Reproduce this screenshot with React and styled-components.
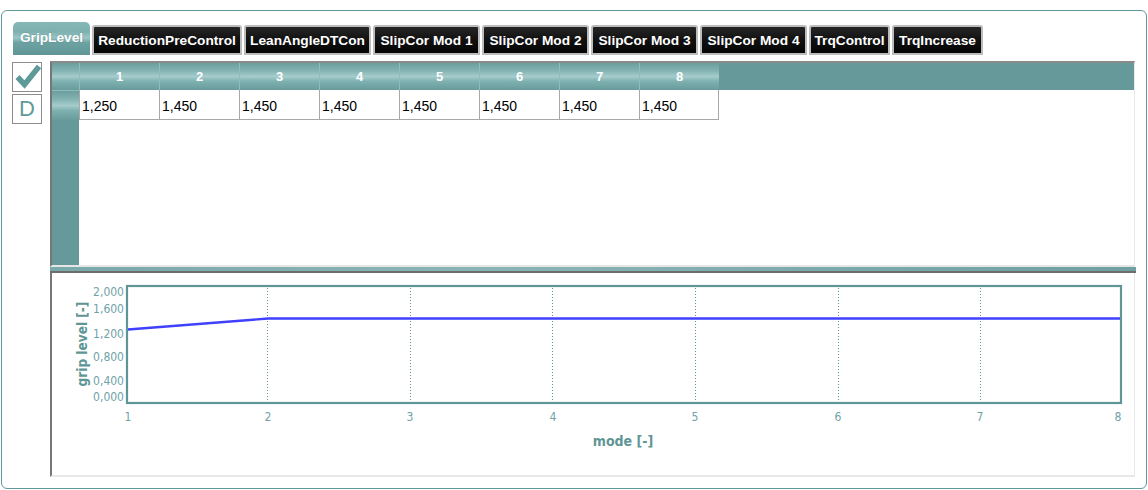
import React from "react";
import styled, { createGlobalStyle } from "styled-components";

const TEAL = "#669999";

const Global = createGlobalStyle`
  html, body { margin: 0; padding: 0; background: #ffffff; }
  body { font-family: "Liberation Sans", Arial, sans-serif; }
`;

const Frame = styled.div`
  margin: 10px 0 0 1px;
  width: 1146px;
  height: 479px;
  box-sizing: border-box;
  border: 1px solid #5f9898;
  border-radius: 6px;
  padding: 11px 0 0 10px;
`;

const TabBar = styled.div`
  display: flex;
  align-items: flex-end;
  gap: 2px;
  height: 33px;
  padding-left: 1px;
`;

const Tab = styled.div`
  box-sizing: border-box;
  width: ${(p) => p.$w}px;
  display: flex;
  align-items: center;
  justify-content: center;
  font-family: "Liberation Sans", Arial, sans-serif;
  font-weight: bold;
  font-size: 13.7px;
  color: #ffffff;
  white-space: nowrap;
  border-radius: ${(p) => (p.$active ? "5px 5px 0 0" : "3px 3px 0 0")};
  height: ${(p) => (p.$active ? "33px" : "30px")};
  padding-bottom: ${(p) => (p.$active ? "2px" : "0")};
  border: ${(p) => (p.$active ? "none" : "2px solid #bcbcbc")};
  background: ${(p) =>
    p.$active
      ? "linear-gradient(to bottom, #86b7b7 0%, #7fb1b1 30%, #9cc6c6 48%, #6fa3a3 62%, #5f9595 100%)"
      : "linear-gradient(to bottom, #262626 0%, #111111 50%, #050505 100%)"};
  text-shadow: ${(p) => (p.$active ? "0 0 2px rgba(60,110,110,0.6)" : "none")};
`;

const Body = styled.div`
  display: flex;
  margin-top: 6px;
  gap: 8px;
`;

const SideColumn = styled.div`
  display: flex;
  flex-direction: column;
  gap: 2px;
  padding-top: 1px;
  width: 30px;
`;

const SideButton = styled.div`
  box-sizing: border-box;
  width: 30px;
  height: 30px;
  border: 1px solid #8c8c8c;
  display: flex;
  align-items: center;
  justify-content: center;
  background: #ffffff;
  color: #5f9a9a;
  font-family: "Liberation Sans", Arial, sans-serif;
  font-size: 22px;
  line-height: 1;
`;

const Main = styled.div`
  width: 1085px;
  display: flex;
  flex-direction: column;
`;

const TableFrame = styled.div`
  box-sizing: border-box;
  height: 206px;
  border-top: 2px solid #8a8a8a;
  border-left: 2px solid #777777;
  border-right: 1px solid #e8e8e8;
  border-bottom: 2px solid #e6e6e6;
  display: flex;
  flex-direction: column;
  background: #ffffff;
`;

const HeaderRow = styled.div`
  display: flex;
  height: 27px;
  background: ${TEAL};
`;

const gloss =
  "linear-gradient(to bottom, #6c9e9e 0%, #82b2b2 28%, #a6cccc 50%, #7eb0b0 68%, #689b9b 100%)";

const CornerCell = styled.div`
  width: 27px;
  flex: none;
  background: ${gloss};
`;

const HeadCell = styled.div`
  box-sizing: border-box;
  width: 80px;
  flex: none;
  background: ${gloss};
  border-left: 1px solid #8fbcbc;
  display: flex;
  align-items: center;
  justify-content: center;
  color: #ffffff;
  font-weight: bold;
  font-size: 13px;
`;

const DataRow = styled.div`
  display: flex;
  height: 30px;
`;

const RowHead = styled.div`
  width: 27px;
  flex: none;
  background: ${gloss};
  border-top: 1px solid #8fbcbc;
`;

const DataCell = styled.div`
  box-sizing: border-box;
  width: 80px;
  flex: none;
  border-left: 1px solid #a8a8a8;
  border-bottom: 1px solid #a8a8a8;
  display: flex;
  align-items: center;
  padding: 2px 0 0 2px;
  font-size: 14px;
  color: #000000;
  &:last-child { border-right: 1px solid #a8a8a8; }
`;

const Filler = styled.div`
  flex: 1;
  display: flex;
`;

const FillerHead = styled.div`
  width: 27px;
  background: ${TEAL};
`;

const Splitter = styled.div`
  box-sizing: border-box;
  height: 6px;
  background: linear-gradient(to right, #7aa9a9 0%, #8ab5b5 40%, #6fa1a1 100%);
  border-bottom: 2px solid #6d6d6d;
  width: 1086px;
`;

const ChartPanel = styled.div`
  box-sizing: border-box;
  height: 204px;
  border-left: 2px solid #777777;
  border-right: 1px solid #e8e8e8;
  border-bottom: 2px solid #e8e8e8;
  background: #ffffff;
`;

const ChartSvg = styled.svg`
  display: block;
  font-family: "DejaVu Sans Condensed", "DejaVu Sans", Verdana, sans-serif;
`;

const values = ["1,250", "1,450", "1,450", "1,450", "1,450", "1,450", "1,450", "1,450"];
const tabs = [
  ["GripLevel", 77],
  ["ReductionPreControl", 150],
  ["LeanAngleDTCon", 127],
  ["SlipCor Mod 1", 107],
  ["SlipCor Mod 2", 107],
  ["SlipCor Mod 3", 107],
  ["SlipCor Mod 4", 107],
  ["TrqControl", 81],
  ["TrqIncrease", 91],
];

const yLabels = [
  ["2,000", 292.3],
  ["1,600", 309.3],
  ["1,200", 333.7],
  ["0,800", 357.3],
  ["0,400", 381],
  ["0,000", 397.3],
];
const xPos = [128, 268, 410, 553, 695, 838, 980, 1118];
const grid = [267.5, 410.5, 552.5, 695.5, 838.5, 980.5];

function Chart() {
  return (
    <ChartSvg width="1082" height="202">
      <g transform="translate(-52,-273)">
        <rect x="127" y="286" width="994" height="117" fill="none" stroke="#5f9595" strokeWidth="2.2" />
        {grid.map((x) => (
          <line key={x} x1={x} x2={x} y1="288" y2="402" stroke="#5f9595" strokeWidth="1" strokeDasharray="1 2" />
        ))}
        <polyline
          points="128,329.5 268,318.5 1120,318.5"
          fill="none"
          stroke="#4040ff"
          strokeWidth="2.4"
        />
        {yLabels.map(([t, y]) => (
          <text key={t} x="124" y={y} textAnchor="end" dominantBaseline="central" fontSize="12" fill="#6fa2a8">
            {t}
          </text>
        ))}
        {xPos.map((x, i) => (
          <text key={x} x={x} y="416.7" textAnchor="middle" dominantBaseline="central" fontSize="12" fill="#6fa2a8">
            {i + 1}
          </text>
        ))}
        <text
          x="82"
          y="344"
          transform="rotate(-90 82 344)"
          textAnchor="middle"
          dominantBaseline="central"
          fontWeight="bold"
          fontSize="13.5"
          fill="#5f9595"
        >
          grip level [-]
        </text>
        <text x="623" y="441" textAnchor="middle" dominantBaseline="central" fontWeight="bold" fontSize="14" fill="#5f9595">
          mode [-]
        </text>
      </g>
    </ChartSvg>
  );
}

export default function App() {
  return (
    <>
      <Global />
      <Frame>
        <TabBar>
          {tabs.map(([t, w], i) => (
            <Tab key={t} $w={w} $active={i === 0}>
              {t}
            </Tab>
          ))}
        </TabBar>
        <Body>
          <SideColumn>
            <SideButton>
              <svg width="28" height="28" viewBox="0 0 28 28">
                <polyline
                  points="4.5,14 11.5,21.5 26,3.5"
                  fill="none"
                  stroke="#5f9a9a"
                  strokeWidth="5.5"
                  strokeLinejoin="miter"
                />
              </svg>
            </SideButton>
            <SideButton>D</SideButton>
          </SideColumn>
          <Main>
            <TableFrame>
              <HeaderRow>
                <CornerCell />
                {values.map((_, i) => (
                  <HeadCell key={i}>{i + 1}</HeadCell>
                ))}
              </HeaderRow>
              <DataRow>
                <RowHead />
                {values.map((v, i) => (
                  <DataCell key={i}>{v}</DataCell>
                ))}
              </DataRow>
              <Filler>
                <FillerHead />
              </Filler>
            </TableFrame>
            <Splitter />
            <ChartPanel>
              <Chart />
            </ChartPanel>
          </Main>
        </Body>
      </Frame>
    </>
  );
}
